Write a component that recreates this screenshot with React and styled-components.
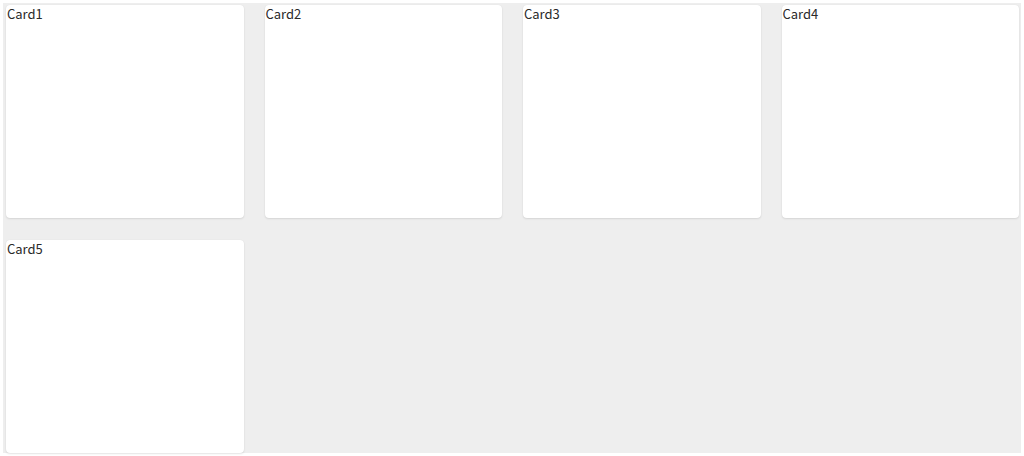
import React from "react";
import styled, { createGlobalStyle } from "styled-components";

const Global = createGlobalStyle`
  html, body { margin: 0; padding: 0; background: #ffffff; }
  body { font-family: "Noto Sans CJK JP", "Noto Sans", sans-serif; }
`;

const Board = styled.div`
  margin: 3px;
  padding: 2px 2px 0 3px;
  background: #eeeeee;
  display: grid;
  grid-template-columns: repeat(4, 1fr);
  column-gap: 21px;
  row-gap: 22px;
  box-sizing: border-box;
  width: 1018px;
`;

const Card = styled.div`
  height: 213px;
  background: #ffffff;
  border-radius: 4px;
  box-shadow: 0 1px 2px rgba(0, 0, 0, 0.1), 0 0 1px rgba(0, 0, 0, 0.08);
  font-size: 13px;
  line-height: 15px;
  padding-top: 1px;
  color: #2a2a2a;
  padding-left: 1px;
  box-sizing: border-box;
`;

export default function App() {
  const cards = ["Card1", "Card2", "Card3", "Card4", "Card5"];
  return (
    <>
      <Global />
      <Board>
        {cards.map((c) => (
          <Card key={c}>{c}</Card>
        ))}
      </Board>
    </>
  );
}
